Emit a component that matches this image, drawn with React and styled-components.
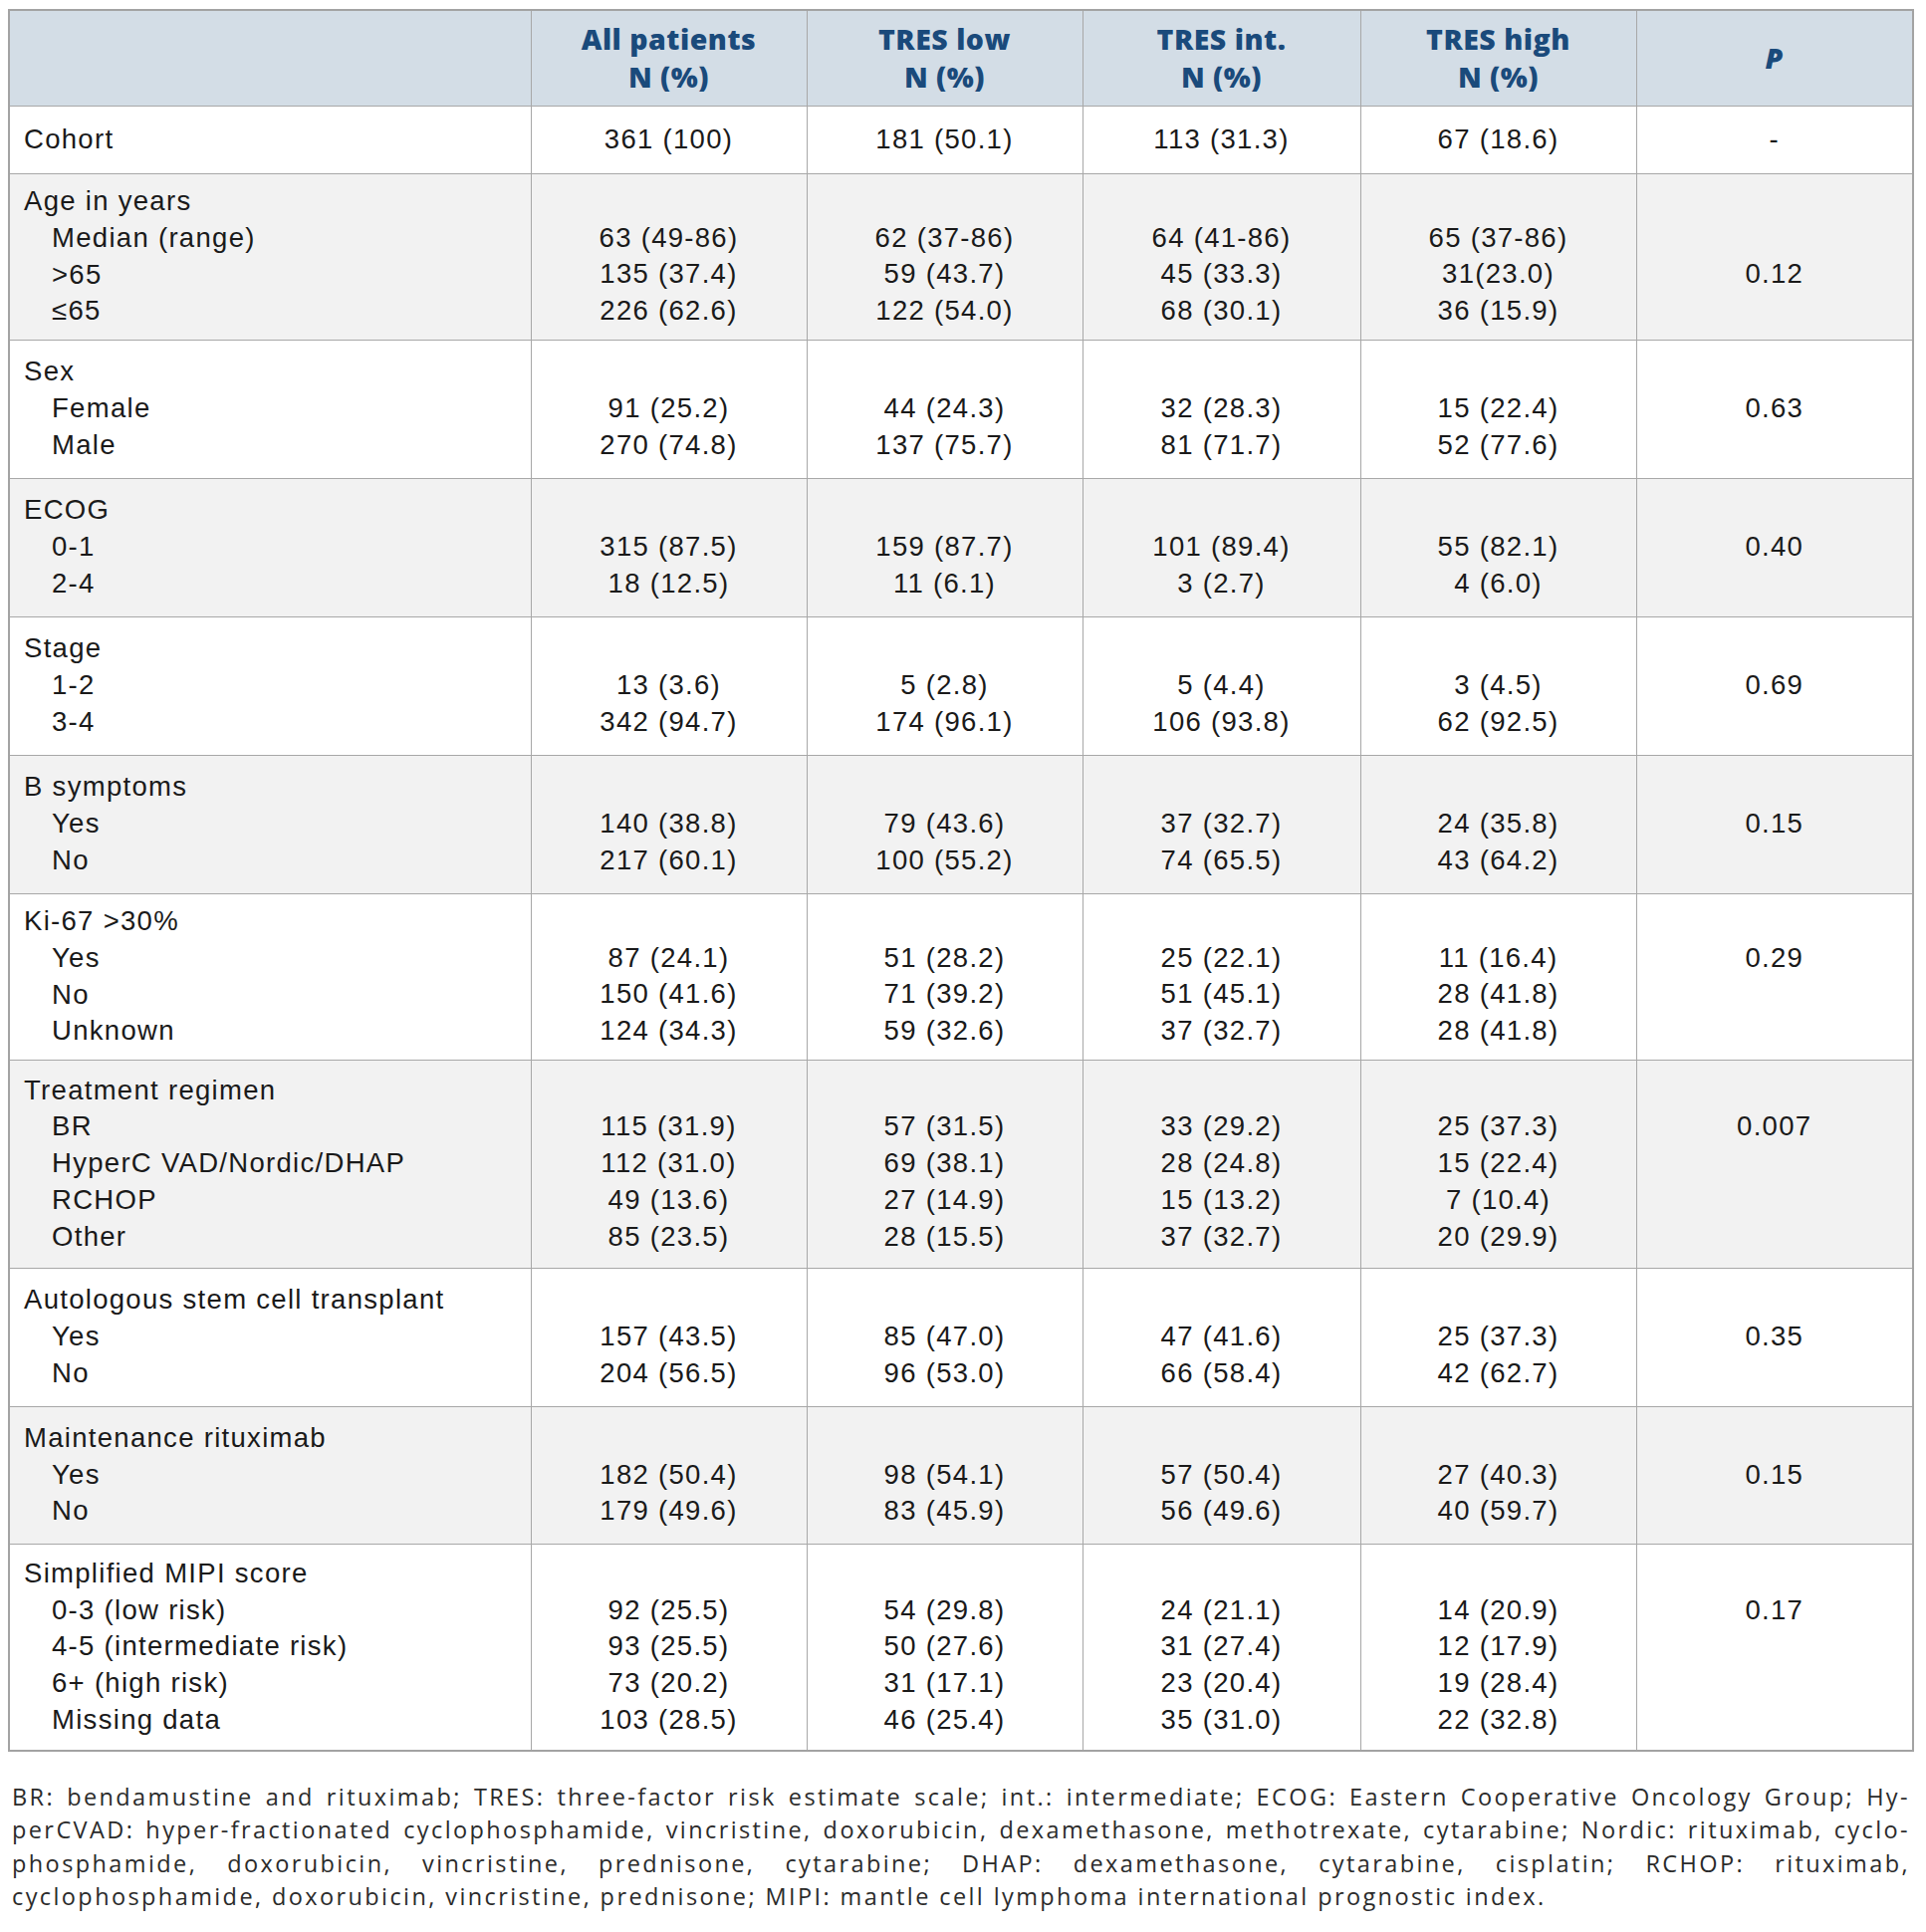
import React from "react";
import styled, { createGlobalStyle } from "styled-components";

const GlobalStyle = createGlobalStyle`
  body {
    margin: 0;
    background: #fff;
    font-family: "Liberation Sans", Arial, sans-serif;
  }
`;

const Page = styled.div`
  padding: 9px 0 0 8px;
  width: 1912px;
`;

const Table = styled.table`
  width: 1912px;
  table-layout: fixed;
  border-collapse: collapse;
  border: 2px solid #a3a3a3;
`;

const HeadRow = styled.tr`
  background: #d3dde6;
  height: 96px;
`;

const HeadCell = styled.th`
  border: 1px solid #a8a8a8;
  padding: 0 8px;
  text-align: center;
  vertical-align: middle;
  font-family: "Open Sans", "Liberation Sans", sans-serif;
  font-weight: 800;
  font-size: 28.5px;
  line-height: 38px;
  letter-spacing: 0.5px;
  color: #1a4a7b;
  font-style: ${(p) => (p.$italic ? "italic" : "normal")};
`;

const BodyRow = styled.tr`
  background: ${(p) => (p.$shaded ? "#f2f2f2" : "#ffffff")};
  height: ${(p) => p.$h}px;
`;

const Cell = styled.td`
  border: 1px solid #a8a8a8;
  padding: 0 14px;
  vertical-align: middle;
  text-align: ${(p) => (p.$left ? "left" : "center")};
  font-family: "Liberation Sans", Arial, sans-serif;
  font-size: 27.5px;
  line-height: 36.7px;
  letter-spacing: 1.3px;
  color: #1a1a1a;
`;

const Line = styled.div`
  white-space: pre;
  min-height: 36.7px;
  padding-left: ${(p) => (p.$indent ? "28px" : "0")};
`;

const Notes = styled.div`
  margin: 29px 0 0 4px;
  width: 1906px;
  font-family: "Open Sans", "Liberation Sans", sans-serif;
  font-size: 23.5px;
  line-height: 33.4px;
  letter-spacing: 2.4px;
  color: #2b2b2b;
`;

const NoteLine = styled.div`
  text-align: ${(p) => (p.$last ? "left" : "justify")};
  text-align-last: ${(p) => (p.$last ? "left" : "justify")};
  white-space: nowrap;
`;

const heads = ["All patients", "TRES low", "TRES int.", "TRES high"];

const rows = [
  { label: "Cohort", h: 68, items: [], single: ["361 (100)", "181 (50.1)", "113 (31.3)", "67 (18.6)"], p: "-" },
  {
    label: "Age in years",
    h: 167,
    items: [
      ["Median (range)", "63 (49-86)", "62 (37-86)", "64 (41-86)", "65 (37-86)"],
      [">65", "135 (37.4)", "59 (43.7)", "45 (33.3)", "31(23.0)"],
      ["≤65", "226 (62.6)", "122 (54.0)", "68 (30.1)", "36 (15.9)"],
    ],
    p: "0.12",
    pAt: 2,
  },
  {
    label: "Sex",
    h: 139,
    items: [
      ["Female", "91 (25.2)", "44 (24.3)", "32 (28.3)", "15 (22.4)"],
      ["Male", "270 (74.8)", "137 (75.7)", "81 (71.7)", "52 (77.6)"],
    ],
    p: "0.63",
  },
  {
    label: "ECOG",
    h: 139,
    items: [
      ["0-1", "315 (87.5)", "159 (87.7)", "101 (89.4)", "55 (82.1)"],
      ["2-4", "18 (12.5)", "11 (6.1)", "3 (2.7)", "4 (6.0)"],
    ],
    p: "0.40",
  },
  {
    label: "Stage",
    h: 139,
    items: [
      ["1-2", "13 (3.6)", "5 (2.8)", "5 (4.4)", "3 (4.5)"],
      ["3-4", "342 (94.7)", "174 (96.1)", "106 (93.8)", "62 (92.5)"],
    ],
    p: "0.69",
  },
  {
    label: "B symptoms",
    h: 139,
    items: [
      ["Yes", "140 (38.8)", "79 (43.6)", "37 (32.7)", "24 (35.8)"],
      ["No", "217 (60.1)", "100 (55.2)", "74 (65.5)", "43 (64.2)"],
    ],
    p: "0.15",
  },
  {
    label: "Ki-67 >30%",
    h: 167,
    items: [
      ["Yes", "87 (24.1)", "51 (28.2)", "25 (22.1)", "11 (16.4)"],
      ["No", "150 (41.6)", "71 (39.2)", "51 (45.1)", "28 (41.8)"],
      ["Unknown", "124 (34.3)", "59 (32.6)", "37 (32.7)", "28 (41.8)"],
    ],
    p: "0.29",
  },
  {
    label: "Treatment regimen",
    h: 209,
    items: [
      ["BR", "115 (31.9)", "57 (31.5)", "33 (29.2)", "25 (37.3)"],
      ["HyperC VAD/Nordic/DHAP", "112 (31.0)", "69 (38.1)", "28 (24.8)", "15 (22.4)"],
      ["RCHOP", "49 (13.6)", "27 (14.9)", "15 (13.2)", "7 (10.4)"],
      ["Other", "85 (23.5)", "28 (15.5)", "37 (32.7)", "20 (29.9)"],
    ],
    p: "0.007",
  },
  {
    label: "Autologous stem cell transplant",
    h: 139,
    items: [
      ["Yes", "157 (43.5)", "85 (47.0)", "47 (41.6)", "25 (37.3)"],
      ["No", "204 (56.5)", "96 (53.0)", "66 (58.4)", "42 (62.7)"],
    ],
    p: "0.35",
  },
  {
    label: "Maintenance rituximab",
    h: 138,
    items: [
      ["Yes", "182 (50.4)", "98 (54.1)", "57 (50.4)", "27 (40.3)"],
      ["No", "179 (49.6)", "83 (45.9)", "56 (49.6)", "40 (59.7)"],
    ],
    p: "0.15",
  },
  {
    label: "Simplified MIPI score",
    h: 208,
    items: [
      ["0-3 (low risk)", "92 (25.5)", "54 (29.8)", "24 (21.1)", "14 (20.9)"],
      ["4-5 (intermediate risk)", "93 (25.5)", "50 (27.6)", "31 (27.4)", "12 (17.9)"],
      ["6+ (high risk)", "73 (20.2)", "31 (17.1)", "23 (20.4)", "19 (28.4)"],
      ["Missing data", "103 (28.5)", "46 (25.4)", "35 (31.0)", "22 (32.8)"],
    ],
    p: "0.17",
  },
];

const notes = [
  "BR: bendamustine and rituximab; TRES: three-factor risk estimate scale; int.: intermediate; ECOG: Eastern Cooperative Oncology Group; Hy-",
  "perCVAD: hyper-fractionated cyclophosphamide, vincristine, doxorubicin, dexamethasone, methotrexate, cytarabine; Nordic: rituximab, cyclo-",
  "phosphamide, doxorubicin, vincristine, prednisone, cytarabine; DHAP: dexamethasone, cytarabine, cisplatin; RCHOP: rituximab,",
  "cyclophosphamide, doxorubicin, vincristine, prednisone; MIPI: mantle cell lymphoma international prognostic index.",
];

function GroupRow({ row, shaded }) {
  if (row.single) {
    return (
      <BodyRow $shaded={shaded} $h={row.h}>
        <Cell $left>{row.label}</Cell>
        {row.single.map((v, i) => (
          <Cell key={i}>{v}</Cell>
        ))}
        <Cell>{row.p}</Cell>
      </BodyRow>
    );
  }
  const pAt = row.pAt ?? 1;
  const total = row.items.length + 1;
  return (
    <BodyRow $shaded={shaded} $h={row.h}>
      <Cell $left>
        <Line>{row.label}</Line>
        {row.items.map((it) => (
          <Line key={it[0]} $indent>{it[0]}</Line>
        ))}
      </Cell>
      {[1, 2, 3, 4].map((c) => (
        <Cell key={c}>
          <Line />
          {row.items.map((it, i) => (
            <Line key={i}>{it[c]}</Line>
          ))}
        </Cell>
      ))}
      <Cell>
        {Array.from({ length: total }).map((_, i) => (
          <Line key={i}>{i === pAt ? row.p : ""}</Line>
        ))}
      </Cell>
    </BodyRow>
  );
}

export default function App() {
  return (
    <Page>
      <GlobalStyle />
      <Table>
        <colgroup>
          <col style={{ width: 524 }} />
          <col style={{ width: 277 }} />
          <col style={{ width: 277 }} />
          <col style={{ width: 279 }} />
          <col style={{ width: 277 }} />
          <col style={{ width: 278 }} />
        </colgroup>
        <thead>
          <HeadRow>
            <HeadCell />
            {heads.map((h) => (
              <HeadCell key={h}>
                {h}
                <br />N (%)
              </HeadCell>
            ))}
            <HeadCell $italic>P</HeadCell>
          </HeadRow>
        </thead>
        <tbody>
          {rows.map((r, i) => (
            <GroupRow key={r.label} row={r} shaded={i % 2 === 1} />
          ))}
        </tbody>
      </Table>
      <Notes>
        {notes.map((n, i) => (
          <NoteLine key={i} $last={i === notes.length - 1}>
            {n}
          </NoteLine>
        ))}
      </Notes>
    </Page>
  );
}
